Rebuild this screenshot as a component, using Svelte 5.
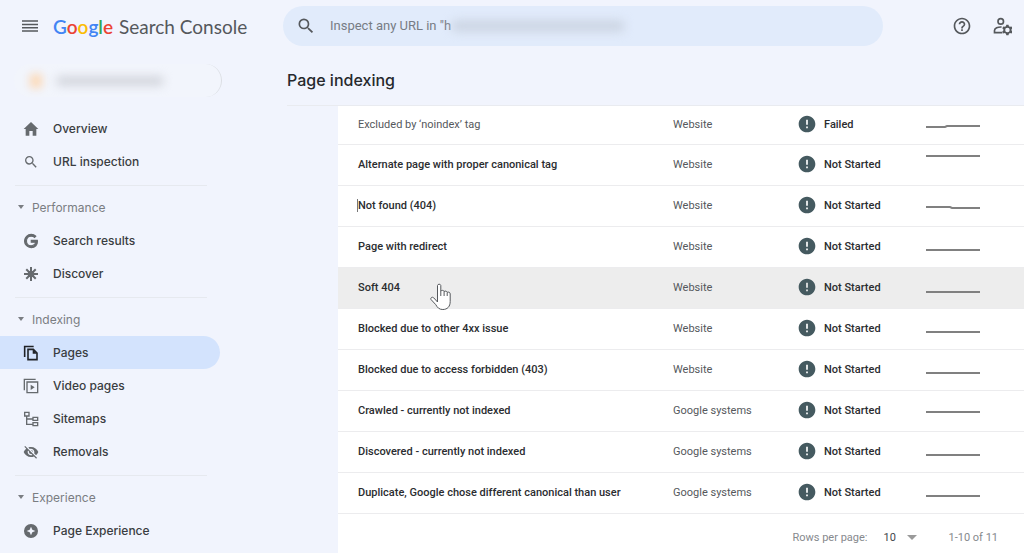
<script lang="ts">
	interface NavItem {
		name: string;
		icon: string;
		href: string;
	}

	interface NavGroup {
		title?: string;
		items: NavItem[];
	}

	interface Issue {
		reason: string;
		source: string;
		validation: string;
		trend: string;
		seen?: boolean;
	}

	const groups: NavGroup[] = [
		{
			items: [
				{ name: 'Overview', icon: 'home', href: '#overview' },
				{ name: 'URL inspection', icon: 'search', href: '#inspect' }
			]
		},
		{
			title: 'Performance',
			items: [
				{ name: 'Search results', icon: 'google', href: '#search-results' },
				{ name: 'Discover', icon: 'discover', href: '#discover' }
			]
		},
		{
			title: 'Indexing',
			items: [
				{ name: 'Pages', icon: 'pages', href: '#pages' },
				{ name: 'Video pages', icon: 'video', href: '#video-pages' },
				{ name: 'Sitemaps', icon: 'sitemap', href: '#sitemaps' },
				{ name: 'Removals', icon: 'removals', href: '#removals' }
			]
		},
		{
			title: 'Experience',
			items: [{ name: 'Page Experience', icon: 'experience', href: '#page-experience' }]
		}
	];

	// trend is a polyline in a 54x36 box
	const issues: Issue[] = [
		{ reason: 'Excluded by ‘noindex’ tag', source: 'Website', validation: 'Failed', trend: '0,21 19,21 21,20 54,20', seen: true },
		{ reason: 'Alternate page with proper canonical tag', source: 'Website', validation: 'Not Started', trend: '0,10 54,10' },
		{ reason: 'Not found (404)', source: 'Website', validation: 'Not Started', trend: '0,20 24,20 26,21 54,21' },
		{ reason: 'Page with redirect', source: 'Website', validation: 'Not Started', trend: '0,22 54,22' },
		{ reason: 'Soft 404', source: 'Website', validation: 'Not Started', trend: '0,23 54,23' },
		{ reason: 'Blocked due to other 4xx issue', source: 'Website', validation: 'Not Started', trend: '0,22 54,22' },
		{ reason: 'Blocked due to access forbidden (403)', source: 'Website', validation: 'Not Started', trend: '0,22 54,22' },
		{ reason: 'Crawled - currently not indexed', source: 'Google systems', validation: 'Not Started', trend: '0,20 54,20' },
		{ reason: 'Discovered - currently not indexed', source: 'Google systems', validation: 'Not Started', trend: '0,22 54,22' },
		{ reason: 'Duplicate, Google chose different canonical than user', source: 'Google systems', validation: 'Not Started', trend: '0,22 54,22' }
	];

	let current = $state('Pages');
	let hovered = $state('Soft 404');
	let rowsPerPage = $state('10');
</script>

{#snippet icon(name: string)}
	<svg class="icon" viewBox="0 0 24 24" aria-hidden="true">
		{#if name === 'home'}
			<path d="M9.5 22v-7h5v7H20V12h3L12 1.500 1 12h3v10z" />
		{:else if name === 'search'}
			<path d="M15.5 14h-.79l-.28-.27A6.471 6.471 0 0 0 16 9.5 6.5 6.5 0 1 0 9.5 16c1.61 0 3.09-.59 4.23-1.57l.27.28v.79l5 4.99L20.49 19l-4.99-5zm-6 0C7.01 14 5 11.99 5 9.5S7.01 5 9.5 5 14 7.01 14 9.5 11.99 14 9.5 14z" />
		{:else if name === 'google'}
			<path transform="translate(2 2) scale(.83)" stroke="currentColor" stroke-width="2" d="M12.48 10.92v3.28h7.84c-.24 1.84-.853 3.187-1.787 4.133-1.147 1.147-2.933 2.4-6.053 2.4-4.827 0-8.6-3.893-8.6-8.72s3.773-8.72 8.6-8.72c2.6 0 4.507 1.027 5.907 2.347l2.307-2.307C18.747 1.44 16.133 0 12.48 0 5.867 0 .307 5.387.307 12s5.56 12 12.173 12c3.573 0 6.267-1.173 8.373-3.36 2.16-2.16 2.84-5.213 2.84-7.667 0-.76-.053-1.467-.173-2.053H12.48z" />
		{:else if name === 'discover'}
			<path class="line" stroke-width="3" d="M12 1.5v21M1.500 12h21M4.900 4.900l14.200 14.200M19.100 4.900L4.900 19.100" />
			<circle cx="12" cy="12" r="5" />
		{:else if name === 'pages'}
			<path class="line" stroke-width="2.4" d="M2.500 18V2.200H16M7.500 6.500h8l5.500 5.500v10H7.500z" />
			<path d="M14.500 6v7H21z" />
		{:else if name === 'video'}
			<path class="line" stroke-width="2" d="M2 18.500V2h17M6 6h16v16H6z" />
			<path d="M11.500 10v8l6-4z" />
		{:else if name === 'sitemap'}
			<path class="line" stroke-width="2" d="M2.500 2h6.500v5.500H2.500zM15 9.500h7V14h-7zM15 17.500h7V22h-7zM5.500 7.500V20H15M5.500 12H15" />
		{:else if name === 'removals'}
			<path d="M12 7c2.76 0 5 2.24 5 5 0 .65-.13 1.26-.36 1.83l2.92 2.92c1.51-1.26 2.7-2.89 3.43-4.75-1.73-4.39-6-7.5-11-7.5-1.4 0-2.74.25-3.98.7l2.16 2.16C10.74 7.13 11.35 7 12 7zM2 4.27l2.28 2.28.46.46C3.08 8.3 1.78 10.02 1 12c1.73 4.39 6 7.5 11 7.5 1.55 0 3.03-.3 4.38-.84l.42.42L19.73 22 21 20.73 3.27 3 2 4.27zM7.53 9.8l1.55 1.55c-.05.21-.08.43-.08.65 0 1.66 1.34 3 3 3 .22 0 .44-.03.65-.08l1.55 1.55c-.67.33-1.41.53-2.2.53-2.76 0-5-2.24-5-5 0-.79.2-1.53.53-2.2zm4.31-.78l3.15 3.15.02-.16c0-1.66-1.34-3-3-3l-.17.01z" />
		{:else if name === 'experience'}
			<path fill-rule="evenodd" d="M12 1.500a10.500 10.500 0 1 0 0 21 10.500 10.500 0 0 0 0-21zM12 5.500l2 4.500 4.500 2-4.500 2-2 4.500-2-4.500-4.500-2 4.500-2z" />
		{:else if name === 'menu'}
			<path d="M0 3.500h24v2.300H0zM0 8.500h24v2.300H0zM0 13.500h24v2.300H0zM0 18.500h24v2.300H0z" />
		{:else if name === 'help'}
			<path d="M11 18h2v-2h-2v2zm1-16C6.48 2 2 6.48 2 12s4.48 10 10 10 10-4.48 10-10S17.52 2 12 2zm0 18c-4.41 0-8-3.59-8-8s3.59-8 8-8 8 3.59 8 8-3.59 8-8 8zm0-14c-2.21 0-4 1.79-4 4h2c0-1.1.9-2 2-2s2 .9 2 2c0 2-3 1.75-3 5h2c0-2.25 3-2.5 3-5 0-2.21-1.79-4-4-4z" />
		{:else if name === 'account'}
			<circle class="line" cx="10.500" cy="6.500" r="3.300" stroke-width="2" />
			<path class="line" stroke-width="2" d="M11.500 13.200c-4.500-.2-8.500 1.500-8.500 4.300v2.500h9.500" />
			<path fill-rule="evenodd" d="M17.200 10.500h2.600l.5 1.800 1.300.7 1.800-.5 1.300 2.200-1.300 1.300v1.500l1.300 1.300-1.300 2.200-1.800-.5-1.300.7-.5 1.800h-2.600l-.5-1.800-1.300-.7-1.800.5-1.300-2.200 1.300-1.300V16l-1.300-1.300 1.300-2.200 1.800.5 1.300-.7zM18.500 14a2.700 2.700 0 1 0 0 5.400 2.700 2.700 0 0 0 0-5.400z" />
		{:else if name === 'error'}
			<path d="M12 2C6.48 2 2 6.48 2 12s4.48 10 10 10 10-4.48 10-10S17.52 2 12 2zm1 15h-2v-2h2v2zm0-4h-2V7h2v6z" />
		{/if}
	</svg>
{/snippet}

<div class="console">
	<aside>
		<div class="brand">
			<button class="icon-button menu" aria-label="Menu">{@render icon('menu')}</button>
			<a class="logo" href="#home">
				<span class="google"><span class="blue">G</span><span class="red">o</span><span class="yellow">o</span><span class="blue">g</span><span class="green">l</span><span class="red">e</span></span>
				<span>Search Console</span>
			</a>
		</div>

		<button class="property" aria-label="Property">
			<span class="favicon"></span>
			<span class="smudge"></span>
		</button>

		<nav>
			{#each groups as group}
				<div class="group">
					{#if group.title}
						<button class="group-title"><span class="caret"></span>{group.title}</button>
					{/if}
					{#each group.items as item (item.name)}
						<a
							href={item.href}
							class="nav-link"
							class:active={current === item.name}
							onclick={() => (current = item.name)}
						>
							{@render icon(item.icon)}
							<span>{item.name}</span>
						</a>
					{/each}
				</div>
			{/each}
		</nav>
	</aside>

	<main>
		<header>
			<label class="inspect">
				{@render icon('search')}
				<input type="text" aria-label="Inspect any URL" placeholder={'Inspect any URL in "h'} />
				<span class="smudge"></span>
			</label>
			<div class="actions">
				<button class="icon-button" aria-label="Help">{@render icon('help')}</button>
				<button class="icon-button" aria-label="User settings">{@render icon('account')}</button>
			</div>
		</header>

		<h1>Page indexing</h1>

		<section class="card">
			<table>
				<colgroup>
					<col />
					<col class="source-col" />
					<col class="validation-col" />
					<col class="trend-col" />
				</colgroup>
				<tbody>
					{#each issues as issue (issue.reason)}
						<tr
							class:hovered={hovered === issue.reason}
							class:seen={issue.seen}
							onmouseenter={() => (hovered = issue.reason)}
						>
							<td class="reason">
								<span class:editing={issue.reason === 'Not found (404)'}>{issue.reason}</span>
								{#if hovered === issue.reason}
									<svg class="pointer" viewBox="0 0 22 28" aria-hidden="true">
										<path d="M7.500 19V2.500a1.700 1.700 0 0 1 3.300 0V8c1-1 3-.8 3.300.5 1-.8 2.800-.4 3.100.8 1.300-.6 3 0 3 1.600v7.600c0 5-2.800 8-7.400 8-3.600 0-5.300-1.800-7-4.800L1 16.500c-.9-1.800 1.300-3 2.700-1.700z" />
										<path d="M10.800 8v5M14.100 8.500V13M17.200 9.500V13" />
									</svg>
								{/if}
							</td>
							<td>{issue.source}</td>
							<td>
								<span class="validation">{@render icon('error')}{issue.validation}</span>
							</td>
							<td class="trend">
								<svg viewBox="0 0 54 36" aria-hidden="true"><polyline points={issue.trend} /></svg>
							</td>
						</tr>
					{/each}
				</tbody>
			</table>

			<footer>
				<label for="rows">Rows per page:</label>
				<span class="rows">
					<select id="rows" bind:value={rowsPerPage}>
						<option>5</option>
						<option>10</option>
						<option>25</option>
					</select>
					<span class="caret"></span>
				</span>
				<span>1-10 of 11</span>
			</footer>
		</section>
	</main>
</div>

<style>
	:global(body) {
		background: #f1f4fd;
	}

	.console {
		display: grid;
		grid-template-columns: 287px minmax(0, 1fr);
		min-height: 100vh;
		font-family: Roboto, 'Liberation Sans', sans-serif;
		font-size: 11px;
		color: #55585c;
	}

	button {
		border: 0;
		padding: 0;
		background: none;
		font: inherit;
		color: inherit;
	}

	.icon {
		display: block;
		flex: none;
		width: 16px;
		height: 16px;
		fill: currentColor;
	}

	.line {
		fill: none;
		stroke: currentColor;
	}

	.caret {
		border: 4px solid transparent;
		border-top-color: currentColor;
		border-bottom: 0;
	}

	.smudge {
		border-radius: 8px;
		filter: blur(5px);
	}

	/* sidebar */
	.brand {
		display: flex;
		align-items: center;
		gap: 15px;
		height: 52px;
		padding-left: 22px;
	}

	.logo {
		display: flex;
		gap: 6px;
		font-family: Lato, 'Liberation Sans', sans-serif;
		font-size: 19px;
		color: #55585c;
		text-decoration: none;
		white-space: nowrap;
	}

	.google {
		font-weight: 600;
	}

	.blue {
		color: #4285f4;
	}

	.red {
		color: #ea4335;
	}

	.yellow {
		color: #fbbc05;
	}

	.green {
		color: #34a853;
	}

	.property {
		display: flex;
		align-items: center;
		gap: 14px;
		width: 208px;
		height: 33px;
		margin: 12px 0 15px 14px;
		padding-left: 16px;
		border-right: 1px solid #dcdfe4;
		border-radius: 17px;
		background: #f2f5fc;
	}

	.favicon {
		width: 12px;
		height: 14px;
		background: #fcd9b8;
		filter: blur(4px);
	}

	.property .smudge {
		width: 108px;
		height: 10px;
		background: #d3d6dd;
	}

	nav {
		font-family: Inter, 'Liberation Sans', sans-serif;
		font-size: 12px;
	}

	.group + .group::before {
		content: '';
		display: block;
		width: 192px;
		height: 1px;
		margin: 7px 0 4px 15px;
		background: #e6e9ef;
	}

	.group-title {
		display: flex;
		align-items: center;
		gap: 8px;
		height: 34px;
		padding-left: 18px;
		color: #7a7d82;
	}

	.group-title .caret {
		border-width: 3px;
		border-top-width: 4px;
		border-bottom: 0;
	}

	.nav-link {
		display: flex;
		align-items: center;
		gap: 14px;
		width: 220px;
		height: 33px;
		padding-left: 23px;
		box-sizing: border-box;
		border-radius: 0 17px 17px 0;
		font-weight: 500;
		color: #3a3d41;
		text-decoration: none;
	}

	.nav-link .icon {
		color: #666a6e;
	}

	.nav-link.active {
		background: #d3e3fd;
	}

	.nav-link.active .icon {
		color: #202327;
	}

	/* header */
	header {
		display: flex;
		align-items: center;
		justify-content: space-between;
		height: 51px;
		padding-right: 12px;
	}

	.inspect {
		position: relative;
		display: flex;
		align-items: center;
		gap: 14px;
		flex: 0 1 600px;
		height: 40px;
		margin-left: -4px;
		padding-left: 13px;
		box-sizing: border-box;
		border-radius: 20px;
		background: #e1ebfb;
	}

	.inspect .icon {
		width: 20px;
		height: 20px;
		color: #55585c;
	}

	.inspect input {
		flex: 1;
		min-width: 0;
		border: 0;
		padding: 0;
		outline: 0;
		background: none;
		font: inherit;
		font-size: 13px;
		color: #33363a;
	}

	.inspect input::placeholder {
		color: #777c84;
		opacity: 1;
	}

	.inspect .smudge {
		position: absolute;
		left: 168px;
		top: 14px;
		width: 174px;
		height: 12px;
		background: #cdd6e4;
	}

	.actions {
		display: flex;
		gap: 20px;
	}

	.actions .icon {
		width: 20px;
		height: 20px;
		color: #55585c;
	}

	h1 {
		margin: 0;
		height: 54px;
		border-bottom: 1px solid #e9ebf0;
		font-family: Inter, 'Liberation Sans', sans-serif;
		font-size: 16px;
		font-weight: 500;
		line-height: 58px;
		color: #26292d;
	}

	/* issues */
	.card {
		margin-left: 51px;
		min-height: calc(100vh - 106px);
		background: #fff;
	}

	table {
		width: 100%;
		table-layout: fixed;
		border-collapse: collapse;
	}

	.source-col {
		width: 126px;
	}

	.validation-col {
		width: 127px;
	}

	.trend-col {
		width: 98px;
	}

	td {
		height: 38px;
		padding: 0 0 2px;
		border-bottom: 1px solid #ececee;
	}

	tr:first-child td {
		height: 36px;
	}

	.hovered {
		background: #ededed;
	}

	.reason {
		position: relative;
		padding-left: 20px;
		font-weight: 500;
		color: #2b2d30;
	}

	.seen .reason {
		font-weight: 400;
		color: #55585c;
	}

	.editing {
		box-shadow: -1px 0 #777;
	}

	.pointer {
		position: absolute;
		left: 92px;
		top: 15px;
		width: 22px;
		height: 28px;
		z-index: 1;
		fill: #fff;
		stroke: #55585c;
	}

	.validation {
		display: flex;
		align-items: center;
		gap: 7px;
		font-weight: 500;
		color: #2b2d30;
	}

	.validation .icon {
		width: 20px;
		height: 20px;
		margin-left: -2px;
		color: #455a60;
	}

	.trend svg {
		display: block;
		width: 54px;
		height: 36px;
		fill: none;
		stroke: #808080;
		stroke-width: 2;
	}

	footer {
		display: flex;
		align-items: center;
		justify-content: flex-end;
		gap: 16px;
		height: 46px;
		padding-right: 26px;
		color: #86898d;
	}

	.rows {
		display: flex;
		align-items: center;
		margin-right: 15px;
	}

	select {
		appearance: none;
		width: 24px;
		border: 0;
		padding: 0;
		background: none;
		font: inherit;
		color: #44474b;
	}

	.rows .caret {
		border-width: 5px;
		border-bottom: 0;
		color: #9a9a9a;
	}
</style>
